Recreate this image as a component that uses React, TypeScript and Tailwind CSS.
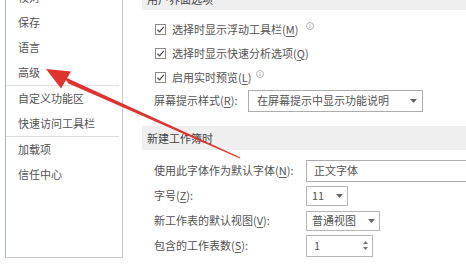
import React from "react";

function U({ children }: { children: React.ReactNode }) {
  return <span className="underline underline-offset-[2px] decoration-[#666]">{children}</span>;
}

function Check() {
  return (
    <span className="w-[11px] h-[11px] border border-[#8a8a8a] bg-white flex items-center justify-center shrink-0 mr-[6px]">
      <svg width="9" height="9" viewBox="0 0 9 9">
        <path d="M1.3 4.6 L3.5 6.9 L7.8 1.8" fill="none" stroke="#4a4a4a" strokeWidth="1.2" />
      </svg>
    </span>
  );
}

function Info({ className }: { className: string }) {
  return (
    <svg width="8" height="8" viewBox="0 0 8 8" className={className}>
      <circle cx="4" cy="4" r="3.5" fill="none" stroke="#a0a0a0" strokeWidth="0.8" />
      <rect x="3.6" y="3.4" width="0.8" height="2.6" fill="#959595" />
      <rect x="3.6" y="1.9" width="0.8" height="0.8" fill="#959595" />
    </svg>
  );
}

function Caret({ className }: { className: string }) {
  return (
    <svg width="7" height="4" viewBox="0 0 7 4" className={className}>
      <path d="M0 0 L7 0 L3.5 4 Z" fill="#666" />
    </svg>
  );
}

const menuTop = ["校对", "保存", "语言", "高级"];
const menuMid = ["自定义功能区", "快速访问工具栏"];
const menuBot = ["加载项", "信任中心"];

export default function App() {
  return (
    <div className="w-[466px] h-[266px] overflow-hidden bg-white relative font-['Noto_Sans_CJK_SC',sans-serif] text-[11px] text-[#525252] leading-none">
      <div className="flex h-[258px]">
        {/* left menu */}
        <div className="pl-[5px] h-full">
          <div className="w-[118px] h-full border-l border-r border-b border-l-[#a9b4c2] border-r-[#c9c9c9] border-b-[#c9c9c9] overflow-hidden">
            <div className="-mt-[15px]">
              {menuTop.map((t) => (
                <div key={t} className="h-[25px] flex items-center pl-[12px]">{t}</div>
              ))}
              <div className="h-px bg-[#dedede] mr-[3px]" />
              {menuMid.map((t) => (
                <div key={t} className="h-[25px] flex items-center pl-[12px]">{t}</div>
              ))}
              <div className="h-px bg-[#dedede] mr-[3px]" />
              {menuBot.map((t) => (
                <div key={t} className="h-[25px] flex items-center pl-[12px]">{t}</div>
              ))}
            </div>
          </div>
        </div>

        {/* main options */}
        <div className="flex-1 h-full overflow-hidden">
          <div className="-mt-[12px]">
            <div className="ml-[19px] h-[22px] bg-[#f0eff0] flex items-center px-[5px] text-[#444]">用户界面选项</div>
            <div className="pt-[7px]">
              <div className="h-[24px] flex items-center pl-[32px]">
                <Check />
                <span>选择时显示浮动工具栏(<U>M</U>)</span>
                <Info className="ml-[8px] -mt-[7px]" />
              </div>
              <div className="h-[24px] flex items-center pl-[32px]">
                <Check />
                <span>选择时显示快速分析选项(<U>Q</U>)</span>
              </div>
              <div className="h-[24px] flex items-center pl-[32px]">
                <Check />
                <span>启用实时预览(<U>L</U>)</span>
                <Info className="ml-[5px] -mt-[7px]" />
              </div>
              <div className="h-[23px] flex items-center pl-[31px]">
                <span className="w-[94px]">屏幕提示样式(<U>R</U>):</span>
                <div className="w-[175px] h-[22px] border border-[#adadad] flex items-center pl-[8px] pr-[5px] justify-between">
                  <span>在屏幕提示中显示功能说明</span>
                  <Caret className="" />
                </div>
              </div>
            </div>

            <div className="mt-[14px] ml-[19px] h-[24px] bg-[#f0eff0] flex items-center px-[5px] text-[#444]">新建工作簿时</div>
            <div className="pt-[8px] pl-[31px]">
              <div className="h-[25px] flex items-center">
                <span className="w-[152px] shrink-0">使用此字体作为默认字体(<U>N</U>):</span>
                <div className="w-[200px] shrink-0 h-[22px] border border-[#adadad] flex items-center pl-[7px]">正文字体</div>
              </div>
              <div className="h-[25px] flex items-center">
                <span className="w-[152px] shrink-0">字号(<U>Z</U>):</span>
                <div className="w-[42px] h-[20px] border border-[#b5b5b5] flex items-center pl-[5px] pr-[4px] justify-between">
                  <span>11</span>
                  <Caret className="" />
                </div>
              </div>
              <div className="h-[25px] flex items-center">
                <span className="w-[152px] shrink-0">新工作表的默认视图(<U>V</U>):</span>
                <div className="w-[74px] h-[20px] border border-[#b5b5b5] flex items-center pl-[5px] pr-[4px] justify-between">
                  <span>普通视图</span>
                  <Caret className="" />
                </div>
              </div>
              <div className="h-[25px] flex items-center">
                <span className="w-[152px] shrink-0">包含的工作表数(<U>S</U>):</span>
                <div className="w-[67px] h-[22px] border border-[#b5b5b5] flex items-center pl-[7px] pr-[4px] justify-between">
                  <span>1</span>
                  <div className="flex flex-col gap-[3px]">
                    <svg width="5" height="3" viewBox="0 0 5 3"><path d="M0 3 L5 3 L2.5 0 Z" fill="#777" /></svg>
                    <svg width="5" height="3" viewBox="0 0 5 3"><path d="M0 0 L5 0 L2.5 3 Z" fill="#777" /></svg>
                  </div>
                </div>
              </div>
            </div>
          </div>
        </div>
      </div>

      {/* red annotation arrow */}
      <svg width="466" height="266" viewBox="0 0 466 266" className="absolute left-0 top-0 pointer-events-none">
        <polygon points="63.5,76.6 68.5,83.4 240.5,158.8 239.5,157.0" fill="#df3330" />
        <polygon points="46,69 71,71.5 61,88.5" fill="#df3330" />
      </svg>
    </div>
  );
}
